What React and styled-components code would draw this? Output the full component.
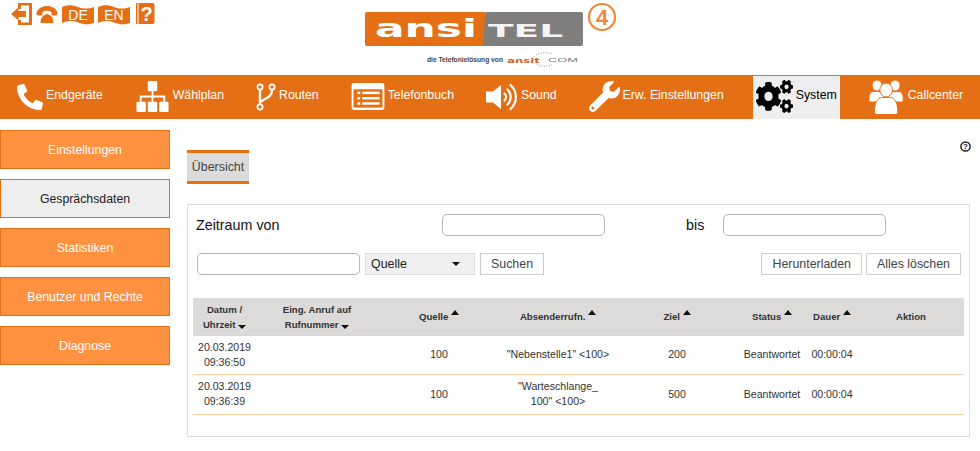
import React from "react";
import styled, { createGlobalStyle } from "styled-components";
import { FaCogs, FaPhoneAlt, FaWrench } from "react-icons/fa";

const GlobalStyle = createGlobalStyle`
  html, body {
    margin: 0;
    padding: 0;
    background: #fff;
    font-family: "Liberation Sans", Arial, sans-serif;
    color: #333;
  }
`;

const ORANGE = "#e56f14";

function ExitIcon() {
  return (
    <svg width="22" height="25" viewBox="0 0 22 25">
      <path d="M8 2h14v22H8v-5h3v2.500h8V4.500h-8V8H8z" fill={ORANGE} />
      <path d="M1 13l7.500-6.500V10H16v6H8.500v3.500z" fill={ORANGE} />
    </svg>
  );
}

function HangupIcon() {
  return (
    <svg width="22" height="25" viewBox="0 0 22 25">
      <path
        d="M0.500 12C2 7 6.500 5 11 5s9 2 10.500 7c.3 1.500-.3 2.500-1.500 2.500h-3c-1 0-1.500-.7-1.500-1.700V11c-1.500-1-3-1.300-4.500-1.300S8 10 6.500 11v1.800c0 1-.5 1.700-1.500 1.700H2c-1.200 0-1.800-1-1.500-2.500z"
        fill={ORANGE}
      />
      <path d="M4.500 21c0-4 3.500-8 6.500-8s6.500 4 6.500 8c0 .7-.3 1-1 1h-11c-.7 0-1-.3-1-1z" fill={ORANGE} />
    </svg>
  );
}

function FlagIcon({ label }) {
  return (
    <svg width="32" height="25" viewBox="0 0 32 25">
      <path d="M0 6c6-2.500 10.500-2 16 0s10 2 16 0v16c-6 2-10.500 1.500-16-.5S6 19.500 0 22z" fill={ORANGE} />
      <text x="16" y="18.500" textAnchor="middle" fontFamily="Liberation Sans" fontSize="14" fill="#fff">
        {label}
      </text>
    </svg>
  );
}

function HelpBookIcon() {
  return (
    <svg width="21" height="25" viewBox="0 0 21 25">
      <rect x="2" y="2" width="1.500" height="21" fill={ORANGE} />
      <path d="M4.500 2h14c1.200 0 2 .8 2 2v17c0 1.200-.8 2-2 2h-14z" fill={ORANGE} />
      <text x="12.500" y="19.500" textAnchor="middle" fontFamily="Liberation Sans" fontWeight="700" fontSize="20" fill="#fff">
        ?
      </text>
    </svg>
  );
}

function HelpCircleIcon() {
  return (
    <svg width="11" height="11" viewBox="0 0 11 11">
      <circle cx="5.500" cy="5.500" r="4.600" fill="none" stroke="#222" strokeWidth="1.500" />
      <text x="5.500" y="8.300" textAnchor="middle" fontFamily="Liberation Sans" fontWeight="700" fontSize="8" fill="#222">
        ?
      </text>
    </svg>
  );
}

function Logo() {
  return (
    <LogoSvg width="252" height="70" viewBox="0 0 252 70">
      <path d="M120.500 12H216a2 2 0 0 1 2 2v30a2 2 0 0 1-2 2H116z" fill="#807f7d" />
      <path d="M2 12h118.500L118 46H2a2 2 0 0 1-2-2V14a2 2 0 0 1 2-2z" fill={ORANGE} />
      <text x="10" y="37" fontFamily="DejaVu Sans" fontWeight="700" fontSize="24" textLength="102" lengthAdjust="spacingAndGlyphs" fill="#fff">
        ansi
      </text>
      <text x="123" y="37" fontFamily="DejaVu Sans" fontWeight="700" fontSize="18" textLength="75" lengthAdjust="spacingAndGlyphs" fill="#f4f4f4">
        TEL
      </text>
      <circle cx="237" cy="17" r="13" fill="none" stroke="#f0873a" strokeWidth="2.200" />
      <text x="237" y="25" textAnchor="middle" fontFamily="Liberation Sans" fontWeight="700" fontSize="22" fill="#f0873a">
        4
      </text>
      <text x="62" y="62" fontFamily="Liberation Sans" fontWeight="700" fontSize="6.500" textLength="76" lengthAdjust="spacingAndGlyphs" fill="#444">
        die Telefonielösung von
      </text>
      <text x="142" y="63" fontFamily="DejaVu Sans" fontWeight="700" fontSize="7" textLength="33" lengthAdjust="spacingAndGlyphs" fill="#d9601a">
        ansit
      </text>
      <text x="183" y="62" fontFamily="Liberation Sans" fontSize="6" textLength="30" lengthAdjust="spacingAndGlyphs" fill="#777">
        COM
      </text>
      <path d="M168 59c1-5 11-8 20-5M172 64c4 3 11 3 16 0" fill="none" stroke="#777" strokeWidth="0.800" strokeDasharray="1 1.500" />
    </LogoSvg>
  );
}

function DialplanIcon() {
  return (
    <svg width="35" height="33" viewBox="0 0 35 35">
      <rect x="12.500" y="1" width="10" height="11" rx="1.500" fill="#fff" />
      <path d="M16.500 12h2v4.500H31V23h-2v-4.500H18.500V23h-2v-4.500H6V23H4v-6.500h12.500z" fill="#fff" />
      <rect x="0.500" y="23" width="10" height="11" rx="1.500" fill="#fff" />
      <rect x="12.500" y="23" width="10" height="11" rx="1.500" fill="#fff" />
      <rect x="24.500" y="23" width="10" height="11" rx="1.500" fill="#fff" />
    </svg>
  );
}

function RouteIcon() {
  return (
    <svg width="20" height="28" viewBox="0 0 20 28" fill="none" stroke="#fff" strokeWidth="1.800">
      <circle cx="4" cy="4" r="2.600" />
      <circle cx="16" cy="4" r="2.600" />
      <circle cx="4" cy="24" r="2.600" />
      <path d="M4 7v14M16 7c0 7-6 8-12 12" strokeWidth="2.400" />
    </svg>
  );
}

function PhonebookIcon() {
  return (
    <svg width="34" height="27" viewBox="0 0 34 28">
      <rect x="0" y="0" width="34" height="28" rx="2.500" fill="#fff" />
      <rect x="2" y="6.500" width="30" height="19" fill={ORANGE} />
      <g fill="#fff">
        <rect x="6" y="9" width="3" height="2.500" />
        <rect x="11" y="9" width="18" height="2.500" />
        <rect x="6" y="14.500" width="3" height="2.500" />
        <rect x="11" y="14.500" width="18" height="2.500" />
        <rect x="6" y="20" width="3" height="2.500" />
        <rect x="11" y="20" width="18" height="2.500" />
      </g>
    </svg>
  );
}

function SoundIcon() {
  return (
    <svg width="32" height="28" viewBox="0 0 32 28">
      <path d="M0 8.500h7L15 2v24l-8-6.500H0z" fill="#fff" />
      <g fill="none" stroke="#fff" strokeWidth="2.200" strokeLinecap="round">
        <path d="M18.500 10.500a5 5 0 0 1 0 7" />
        <path d="M21.500 6.500a10.500 10.500 0 0 1 0 15" />
        <path d="M24.500 2a16 16 0 0 1 0 24" />
      </g>
    </svg>
  );
}

function CallcenterIcon() {
  return (
    <svg width="36" height="36" viewBox="0 0 36 36" stroke={ORANGE} strokeWidth="1">
      <g transform="scale(0.9 1)">
        <circle cx="9" cy="6.500" r="5.500" fill="#fff" />
        <circle cx="29" cy="6.500" r="5.500" fill="#fff" />
        <path d="M0 18c0-3 2-5.500 5-5.500h8c3 0 4 2.500 4 5.500v5H2c-1.500 0-2-1-2-2z" fill="#fff" />
        <path d="M38 18c0-3-2-5.500-5-5.500h-8c-3 0-4 2.500-4 5.500v5h15c1.500 0 2-1 2-2z" fill="#fff" />
        <circle cx="19" cy="11" r="7" fill="#fff" />
        <path d="M6 32c0-8 4-13.500 8-13.500h10c4 0 8 5.500 8 13.500 0 2-1 3.500-3 3.500H9c-2 0-3-1.500-3-3.500z" fill="#fff" />
      </g>
    </svg>
  );
}

const navItems = [
  { label: "Endgeräte", icon: <FaPhoneAlt size={26} color="#fff" /> },
  { label: "Wählplan", icon: <DialplanIcon /> },
  { label: "Routen", icon: <RouteIcon /> },
  { label: "Telefonbuch", icon: <PhonebookIcon /> },
  { label: "Sound", icon: <SoundIcon /> },
  { label: "Erw. Einstellungen", icon: <FaWrench size={31} color="#fff" /> },
  { label: "System", icon: <GearsIcon preserveAspectRatio="none" />, active: true },
  { label: "Callcenter", icon: <CallcenterIcon /> },
];

const sideItems = [
  { label: "Einstellungen" },
  { label: "Gesprächsdaten", active: true },
  { label: "Statistiken" },
  { label: "Benutzer und Rechte" },
  { label: "Diagnose" },
];

const rows = [
  { date: "20.03.2019", time: "09:36:50", from: "100", caller: ['"Nebenstelle1" <100>'], to: "200" },
  { date: "20.03.2019", time: "09:36:39", from: "100", caller: ['"Warteschlange_', '100" <100>'], to: "500" },
];

export default function App() {
  return (
    <>
      <GlobalStyle />
      <Header>
        <TopIcons>
          <ExitIcon />
          <HangupIcon />
          <FlagIcon label="DE" />
          <FlagIcon label="EN" />
          <HelpBookIcon />
        </TopIcons>
        <Logo />
      </Header>
      <Nav>
        {navItems.map((item) => (
          <NavItem key={item.label} $active={item.active}>
            {item.icon}
            <NavLabel>{item.label}</NavLabel>
          </NavItem>
        ))}
      </Nav>
      <Body>
        <Sidebar>
          {sideItems.map((item) => (
            <SideButton key={item.label} $active={item.active}>
              {item.label}
            </SideButton>
          ))}
        </Sidebar>
        <Main>
          <HelpRow>
            <HelpCircleIcon />
          </HelpRow>
          <Tab>Übersicht</Tab>
          <Panel>
            <RangeRow>
              <RangeLabel>Zeitraum von</RangeLabel>
              <TextField />
              <UntilLabel>bis</UntilLabel>
              <TextField />
            </RangeRow>
            <SearchRow>
              <TextField />
              <SelectBox>
                Quelle
                <Caret />
              </SelectBox>
              <ActionButton>Suchen</ActionButton>
              <RightButtons>
                <ActionButton>Herunterladen</ActionButton>
                <ActionButton>Alles löschen</ActionButton>
              </RightButtons>
            </SearchRow>
            <Table>
              <colgroup>
                <col width="63" />
                <col width="122" />
                <col width="122" />
                <col width="116" />
                <col width="122" />
                <col width="68" />
                <col width="52" />
                <col width="106" />
              </colgroup>
              <thead>
                <tr>
                  <Th>
                    Datum /<br />Uhrzeit <Caret $small />
                  </Th>
                  <Th>
                    Eing. Anruf auf<br />Rufnummer <Caret $small />
                  </Th>
                  <Th>Quelle <Caret $small $up /></Th>
                  <Th>Absenderrufn. <Caret $small $up /></Th>
                  <Th>Ziel <Caret $small $up /></Th>
                  <Th>Status <Caret $small $up /></Th>
                  <Th>Dauer <Caret $small $up /></Th>
                  <Th>Aktion</Th>
                </tr>
              </thead>
              <tbody>
                {rows.map((row) => (
                  <tr key={row.time}>
                    <Td>{row.date}<br />{row.time}</Td>
                    <Td />
                    <Td>{row.from}</Td>
                    <Td>
                      {row.caller.map((line) => (
                        <div key={line}>{line}</div>
                      ))}
                    </Td>
                    <Td>{row.to}</Td>
                    <Td>Beantwortet</Td>
                    <Td>00:00:04</Td>
                    <Td />
                  </tr>
                ))}
              </tbody>
            </Table>
          </Panel>
        </Main>
      </Body>
    </>
  );
}

function GearsIcon(props) {
  return <GearsGlyph color="#000" {...props} />;
}

const GearsGlyph = styled(FaCogs)`
  width: 37px;
  height: 33px;
`;

const LogoSvg = styled.svg`
  margin-left: 2px;
`;

const Header = styled.header`
  display: grid;
  grid-template-columns: 1fr auto 1fr;
  height: 75px;
`;

const TopIcons = styled.div`
  display: flex;
  align-items: flex-start;
  gap: 4px;
  padding: 1px 0 0 10px;
`;

const Nav = styled.nav`
  display: flex;
  align-items: stretch;
  gap: 26px;
  height: 44px;
  padding-left: 14px;
  background: ${ORANGE};
`;

const NavItem = styled.div`
  display: flex;
  align-items: center;
  gap: 3px;
  margin-top: 1px;
  padding: 0 3px 2px;
  font-size: 12.300px;
  color: ${(p) => (p.$active ? "#000" : "#fff")};
  background: ${(p) => (p.$active ? "#eee" : "transparent")};
`;

const NavLabel = styled.span`
  padding-bottom: 3px;
`;

const Body = styled.div`
  display: flex;
  align-items: flex-start;
  gap: 17px;
`;

const Sidebar = styled.aside`
  display: flex;
  flex-direction: column;
  gap: 10px;
  width: 170px;
  padding-top: 11px;
`;

const SideButton = styled.div`
  display: flex;
  align-items: center;
  justify-content: center;
  box-sizing: border-box;
  height: 39px;
  font-size: 12.300px;
  border: 1px solid ${ORANGE};
  color: ${(p) => (p.$active ? "#222" : "#fff")};
  background: ${(p) => (p.$active ? "#eee" : "#ff9140")};
`;

const Main = styled.main`
  width: 784px;
  padding-top: 22px;
`;

const HelpRow = styled.div`
  display: flex;
  justify-content: flex-end;
  height: 9px;
`;

const Tab = styled.div`
  display: flex;
  align-items: center;
  justify-content: center;
  box-sizing: border-box;
  width: 62px;
  height: 34px;
  font-size: 12.400px;
  color: #444;
  background: #dcdbda;
  border-top: 3px solid ${ORANGE};
  border-bottom: 3px solid ${ORANGE};
`;

const Panel = styled.section`
  box-sizing: border-box;
  width: 783px;
  height: 233px;
  margin-top: 20px;
  padding: 9px 5px 0 5px;
  border: 1px solid #ddd;
`;

const RangeRow = styled.div`
  display: flex;
  align-items: center;
  height: 22px;
  padding-left: 3px;
`;

const RangeLabel = styled.div`
  width: 246px;
  font-size: 14.300px;
  color: #111;
`;

const UntilLabel = styled.div`
  width: 37px;
  margin-left: 81px;
  font-size: 14.300px;
  color: #111;
`;

const TextField = styled.div`
  box-sizing: border-box;
  width: 163px;
  height: 22px;
  background: #fff;
  border: 1px solid #b5b5b5;
  border-radius: 5px;
`;

const SearchRow = styled.div`
  display: flex;
  align-items: center;
  gap: 5px;
  height: 22px;
  margin-top: 17px;
  padding: 0 3px 0 4px;
`;

const SelectBox = styled.div`
  display: flex;
  align-items: center;
  justify-content: space-between;
  box-sizing: border-box;
  width: 110px;
  height: 22px;
  padding: 0 14px 0 5px;
  font-size: 12.400px;
  color: #222;
  background: #f0f0f0;
  border: 1px solid #ddd;
`;

const ActionButton = styled.div`
  display: flex;
  align-items: center;
  box-sizing: border-box;
  height: 22px;
  padding: 0 10px;
  font-size: 12.400px;
  color: #444;
  background: #fff;
  border: 1px solid #ccc;
`;

const RightButtons = styled.div`
  display: flex;
  gap: 4px;
  margin-left: auto;
`;

const Caret = styled.span`
  display: inline-block;
  width: 0;
  height: 0;
  border-left: ${(p) => (p.$small ? 4 : 4.5)}px solid transparent;
  border-right: ${(p) => (p.$small ? 4 : 4.5)}px solid transparent;
  ${(p) =>
    p.$up
      ? "border-bottom: 5px solid #111; vertical-align: 5px;"
      : "border-top: 4px solid #111; vertical-align: -1px;"}
`;

const Table = styled.table`
  width: 771px;
  margin-top: 23px;
  table-layout: fixed;
  border-collapse: separate;
  border-spacing: 0;
`;

const Th = styled.th`
  height: 37px;
  padding: 0;
  font-size: 9.600px;
  line-height: 15px;
  font-weight: 700;
  color: #333;
  background: #dcdbda;
  border-bottom: 1px solid #fbcf9f;
`;

const Td = styled.td`
  height: 38px;
  padding: 0 0 1px;
  font-size: 10.600px;
  line-height: 15px;
  text-align: center;
  color: #333;
  border-bottom: 1px solid #fbcf9f;

  tr:first-child > & {
    height: 37px;
  }
`;
